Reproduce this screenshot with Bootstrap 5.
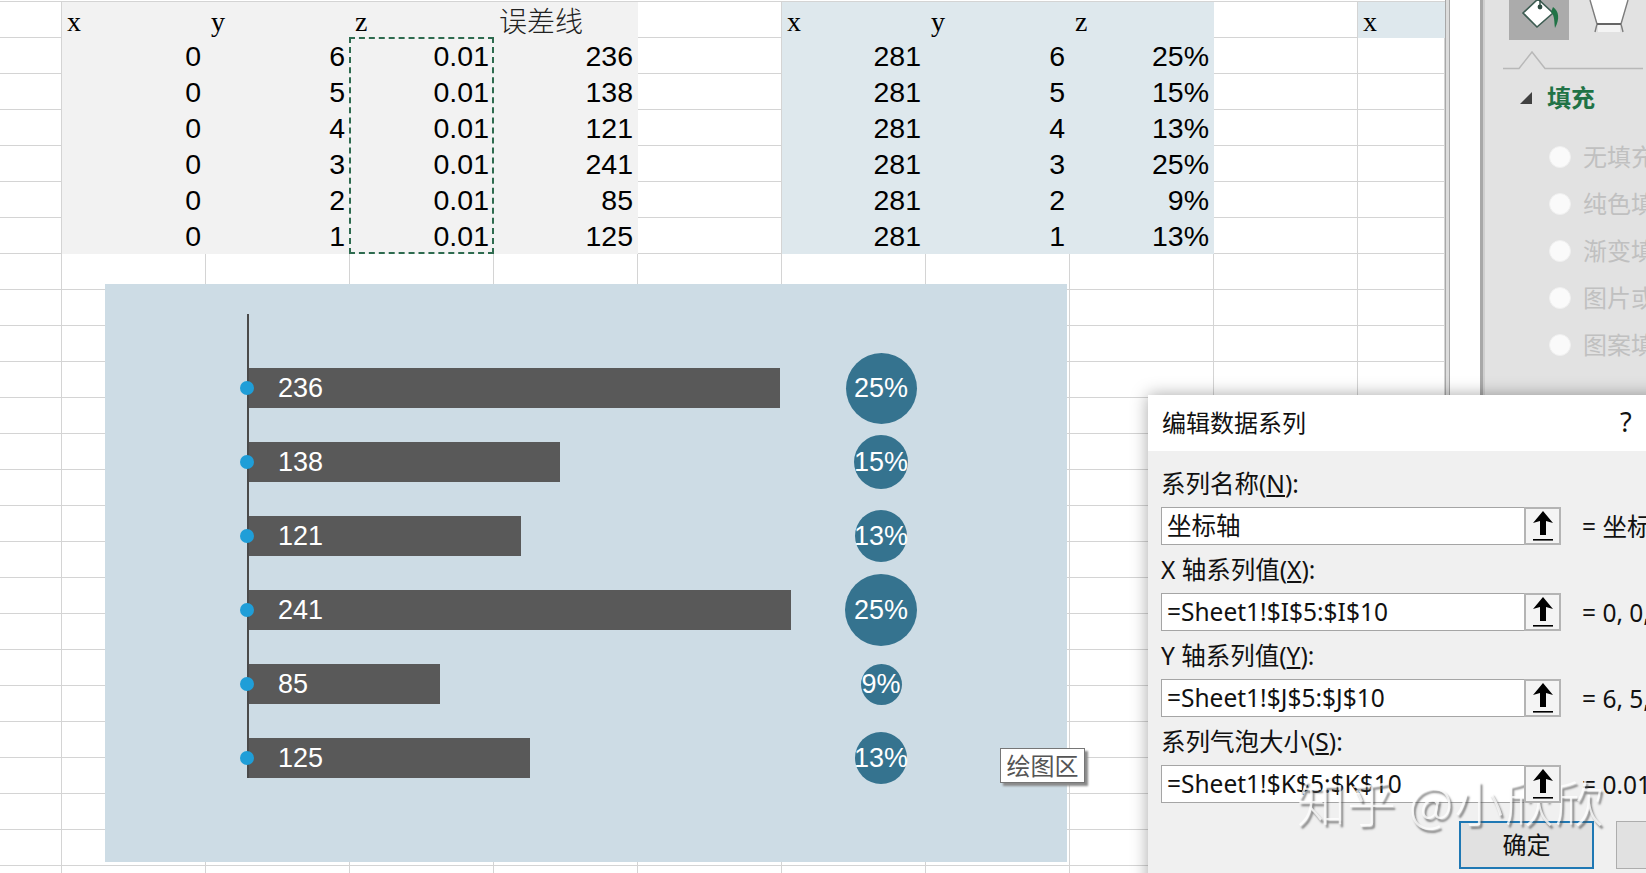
<!DOCTYPE html>
<html lang="zh">
<head>
    <meta charset="UTF-8">
    <meta name="viewport" content="width=device-width, initial-scale=1.0">
    <title>编辑数据系列</title>
    <link rel="stylesheet" href="https://cdn.jsdelivr.net/npm/bootstrap@5.3.3/dist/css/bootstrap.min.css">
    <style>
        body {
            margin: 0;
            background-color: #fff;
            font-family: "Liberation Sans", "Noto Sans CJK SC", sans-serif;
        }
        .screen {
            width: 1646px;
            height: 873px;
            overflow: hidden;
        }
        .ui-font {
            font-family: "Noto Sans", "Noto Sans CJK SC", sans-serif;
        }

        /* worksheet */
        .sheet-area {
            width: 1445px;
            flex: none;
            padding-top: 1px;
        }
        .sheet-grid {
            table-layout: fixed;
            width: 1445px;
            margin: 0;
            border-collapse: separate;
            border-spacing: 0;
            border-top: 1px solid #d4d4d4;
        }
        .sheet-grid td {
            height: 36px;
            padding: 0 4px 0 5px;
            box-sizing: border-box;
            border-width: 0 1px 1px 0;
            border-style: solid;
            border-color: #d4d4d4;
            vertical-align: bottom;
            font-size: 28.5px;
            line-height: 28px;
            color: #000;
            background-color: #fff;
            box-shadow: none;
            white-space: nowrap;
        }
        .sheet-grid td.cell-num { text-align: right; padding-bottom: 3px; }
        .sheet-grid td.cell-head { font-family: "Liberation Serif", "Noto Sans CJK SC", serif; font-size: 28px; padding-bottom: 1px; }
        .sheet-grid td.cell-cjk { font-family: "Noto Sans CJK SC", sans-serif; font-size: 28px; font-weight: 300; padding: 0 0 3px 5px; color: #222; }
        .sheet-grid td.fill-grey { background-color: #f2f2f2; border-color: #f2f2f2; }
        .sheet-grid td.fill-blue { background-color: #dee8ed; border-color: #dee8ed; }
        .copy-range {
            left: 349px;
            top: 37px;
            width: 145px;
            height: 217px;
            border: 2px dashed #2e6b4f;
        }

        /* chart */
        .chart-box {
            left: 105px;
            top: 284px;
            width: 962px;
            height: 578px;
            background-color: #cddce5;
            padding: 30px 0 0 142px;
        }
        .plot-area {
            width: 684px;
            height: 464px;
            border-left: 2px solid #4a4a4a;
            padding-top: 54px;
            gap: 34px;
        }
        .plot-row { height: 40px; flex: none; }
        .bar-track { flex: 1 1 0; height: 40px; }
        .data-bar {
            height: 40px;
            background-color: #595959;
            color: #fff;
            font-size: 27px;
            line-height: 41px;
            padding-left: 29px;
        }
        .axis-dot {
            left: -9px;
            top: 13px;
            width: 14px;
            height: 14px;
            background-color: #1f9ed8;
        }
        .bubble-slot { width: 100px; flex: none; }
        .data-bubble {
            flex: none;
            background-color: #35738f;
            color: #fff;
            font-size: 27px;
            padding-top: 1px;
            white-space: nowrap;
        }
        .area-tip {
            left: 1000px;
            top: 748px;
            width: 85px;
            height: 35px;
            background-color: #fff;
            border: 1px solid #767676;
            box-shadow: 3px 3px 2px #8a8a8a;
            color: #555;
            font-size: 24px;
            line-height: 34px;
        }

        /* splitter and format pane */
        .pane-split {
            width: 35px;
            flex: none;
            border-left: 1px solid #a8a8a8;
            box-shadow: inset 3px 0 0 #dcdcdc, inset 4px 0 0 #a8a8a8;
        }
        .format-pane {
            flex: 1 1 0;
            background-color: #e2e2e2;
            border-left: 3px solid #a8a8a8;
            box-shadow: inset 2px 0 0 #cfcfcf;
            white-space: nowrap;
            overflow: hidden;
        }
        .pane-tabs { height: 40px; padding-left: 26px; gap: 20px; }
        .pane-tab-on { width: 60px; height: 40px; background-color: #ababab; }
        .tab-notch { height: 33px; }
        .fill-head {
            height: 50px;
            padding-left: 37px;
            gap: 15px;
            color: #217346;
            font-weight: 700;
            font-size: 24px;
            margin-bottom: 10px;
        }
        .fill-caret {
            width: 0;
            height: 0;
            border-left: 12px solid transparent;
            border-bottom: 12px solid #404040;
        }
        .fill-option { height: 47px; padding-left: 66px; gap: 12px; margin: 0; }
        .fill-option .form-check-input {
            width: 22px;
            height: 22px;
            margin: 0;
            flex: none;
            background-color: #fafafa;
            border-color: #f0f0f0;
            opacity: 1;
        }
        .fill-option .form-check-label {
            color: #9f9f9f;
            font-size: 24px;
            opacity: 1;
        }

        /* dialog */
        .series-dialog {
            left: 1148px;
            top: 395px;
            width: 520px;
            height: 500px;
            background-color: #f0f0f0;
            box-shadow: 0 0 16px rgba(0, 0, 0, .35);
            color: #111;
            font-size: 24px;
        }
        .dialog-title {
            height: 56px;
            background-color: #fff;
            padding: 0 24px 0 14px;
        }
        .dialog-help { left: 472px; top: 7px; font-size: 27px; }
        .dialog-form { padding: 8px 0 0 13px; }
        .field-label { height: 48px; line-height: 50px; white-space: nowrap; font-size: 24.5px; }
        .field-row { height: 38px; }
        .field-input {
            width: 400px;
            height: 38px;
            flex: none;
            flex-wrap: nowrap;
        }
        .field-input .form-control {
            height: 38px;
            padding: 0 5px;
            border: 1px solid #a5a5a5;
            border-right: 0;
            border-radius: 0;
            background-color: #fff;
            color: #111;
            font-size: 24.5px;
            line-height: 36px;
            white-space: nowrap;
            overflow: hidden;
        }
        .field-pick {
            width: 37px;
            flex: none;
            padding: 0;
            border: 2px solid #b4b4b4;
            border-radius: 0;
            background-color: #f4f4f4;
        }
        .field-value { margin-left: 21px; height: 38px; font-size: 24.5px; white-space: nowrap; line-height: 40px; }
        .dialog-ok,
        .dialog-cancel {
            top: 426px;
            height: 48px;
            border-radius: 0;
            background-color: #e1e1e1;
            color: #111;
            font-size: 24px;
            padding: 0;
        }
        .dialog-ok { left: 311px; width: 135px; border: 2px solid #1f78b4; }
        .dialog-cancel { left: 468px; width: 135px; border: 1px solid #adadad; }

        .site-mark {
            left: 1297px;
            top: 768px;
            font-family: "Noto Sans CJK SC", sans-serif;
            font-weight: 300;
            font-size: 49px;
            letter-spacing: 1px;
            line-height: 66px;
            color: rgba(255, 255, 255, .78);
            text-shadow: 2px 3px 2px rgba(80, 80, 80, .65);
            white-space: nowrap;
        }
    </style>
</head>
<body>
    <div class="screen position-relative d-flex">
        <div class="sheet-area position-relative">
            <table class="sheet-grid">
                <colgroup id="sheet-cols"></colgroup>
                <tbody id="sheet-body"></tbody>
            </table>
            <div class="copy-range position-absolute"></div>
        </div>

        <div class="pane-split"></div>

        <div class="format-pane ui-font">
            <div class="pane-tabs d-flex">
                <div class="pane-tab-on">
                    <svg width="60" height="40" viewBox="0 0 60 40">
                        <path d="M14 13 L29 -1 L44 13 L28 27 Z" fill="#fff" stroke="#3d5c52" stroke-width="1.6"/>
                        <line x1="31" y1="0" x2="31" y2="7" stroke="#2c4a40" stroke-width="1.4"/>
                        <circle cx="31" cy="7" r="2.4" fill="#2c4a40"/>
                        <path d="M44 7 C50 11 51 19 46 28 C45 22 46 16 42 12 Z" fill="#217346"/>
                    </svg>
                </div>
                <svg width="50" height="34" viewBox="0 0 50 34">
                    <path d="M1 0 L8 24 L32 24 L39 0 Z" fill="#fff"/>
                    <path d="M1 0 L8 24 M39 0 L32 24 M8 24 L6 32 M32 24 L34 32" fill="none" stroke="#7c7c7c" stroke-width="1.4"/>
                    <line x1="8" y1="24" x2="32" y2="24" stroke="#666" stroke-width="2"/>
                    <rect x="9" y="25" width="22" height="7" fill="#f4f4f4"/>
                </svg>
            </div>
            <svg class="tab-notch d-block" width="160" height="33" viewBox="0 0 160 33">
                <path d="M20 28.5 H36 L49 12 L62 28.5 H160" fill="none" stroke="#b8b8b8" stroke-width="1.5"/>
            </svg>
            <div class="fill-head d-flex align-items-center">
                <span class="fill-caret"></span>
                <span>填充</span>
            </div>
            <div id="fill-options"></div>
        </div>

        <div class="chart-box position-absolute">
            <div class="plot-area d-flex flex-column" id="plot-area"></div>
        </div>
        <div class="area-tip position-absolute text-center ui-font">绘图区</div>

        <div class="series-dialog position-absolute ui-font">
            <div class="dialog-title d-flex align-items-center position-relative">
                <span>编辑数据系列</span>
                <span class="dialog-help position-absolute">?</span>
            </div>
            <div class="dialog-form" id="dialog-form"></div>
            <button type="button" class="btn dialog-ok position-absolute">确定</button>
            <button type="button" class="btn dialog-cancel position-absolute">取消</button>
        </div>

        <div class="site-mark position-absolute">知乎 @小欣欣</div>
    </div>

    <script>
        const TOTAL_ROWS = 25;
        const greyRows = [
            ['x', 'y', 'z', '误差线'],
            ['0', '6', '0.01', '236'],
            ['0', '5', '0.01', '138'],
            ['0', '4', '0.01', '121'],
            ['0', '3', '0.01', '241'],
            ['0', '2', '0.01', '85'],
            ['0', '1', '0.01', '125']
        ];
        const blueRows = [
            ['x', 'y', 'z'],
            ['281', '6', '25%'],
            ['281', '5', '15%'],
            ['281', '4', '13%'],
            ['281', '3', '25%'],
            ['281', '2', '9%'],
            ['281', '1', '13%']
        ];

        const series = [
            { value: 236, pct: '25%', size: 71 },
            { value: 138, pct: '15%', size: 54 },
            { value: 121, pct: '13%', size: 52 },
            { value: 241, pct: '25%', size: 72 },
            { value: 85, pct: '9%', size: 41 },
            { value: 125, pct: '13%', size: 52 }
        ];

        const fields = [
            { label: '系列名称', key: 'N', input: '坐标轴', result: '= 坐标轴' },
            { label: 'X 轴系列值', key: 'X', input: '=Sheet1!$I$5:$I$10', result: '= 0, 0, 0' },
            { label: 'Y 轴系列值', key: 'Y', input: '=Sheet1!$J$5:$J$10', result: '= 6, 5, 4' },
            { label: '系列气泡大小', key: 'S', input: '=Sheet1!$K$5:$K$10', result: '= 0.01, 0.01' }
        ];

        const fillOptions = ['无填充(N)', '纯色填充(S)', '渐变填充(G)', '图片或纹理填充(P)', '图案填充(A)'];

        function cellHtml(text, rowIndex, fill) {
            let cls = fill;
            if (rowIndex === 0) {
                cls += text === '误差线' ? ' cell-cjk' : ' cell-head';
            } else {
                cls += ' cell-num';
            }
            return `<td class="${cls}">${text}</td>`;
        }

        function buildSheet() {
            let cols = '<col style="width:62px">';
            for (let i = 0; i < 9; i++) cols += '<col style="width:144px">';
            cols += '<col style="width:87px">';
            document.getElementById('sheet-cols').innerHTML = cols;

            let html = '';
            for (let r = 0; r < TOTAL_ROWS; r++) {
                html += '<tr><td></td>';
                if (r < greyRows.length) {
                    greyRows[r].forEach(t => { html += cellHtml(t, r, 'fill-grey'); });
                    html += '<td></td>';
                    blueRows[r].forEach(t => { html += cellHtml(t, r, 'fill-blue'); });
                    html += '<td></td>';
                    html += r === 0 ? '<td class="fill-blue cell-head">x</td>' : '<td></td>';
                } else {
                    for (let c = 0; c < 10; c++) html += '<td></td>';
                }
                html += '</tr>';
            }
            document.getElementById('sheet-body').innerHTML = html;
        }

        function buildChart() {
            document.getElementById('plot-area').innerHTML = series.map(item => `
                <div class="plot-row d-flex align-items-center position-relative">
                    <span class="axis-dot position-absolute rounded-circle"></span>
                    <div class="bar-track">
                        <div class="data-bar" style="width:${item.value * 2.25}px">${item.value}</div>
                    </div>
                    <div class="bubble-slot d-flex justify-content-center align-items-center">
                        <div class="data-bubble rounded-circle d-flex justify-content-center align-items-center" style="width:${item.size}px;height:${item.size}px">${item.pct}</div>
                    </div>
                </div>`).join('');
        }

        function buildDialog() {
            const arrow = `
                <svg width="24" height="32" viewBox="0 0 24 32">
                    <path d="M12 1 L22 13 L15 11 V25 H9 V11 L2 13 Z" fill="#000"/>
                    <rect x="2" y="29" width="20" height="1.6" fill="#000"/>
                </svg>`;
            document.getElementById('dialog-form').innerHTML = fields.map(f => `
                <div class="field-label">${f.label}(<u>${f.key}</u>):</div>
                <div class="field-row d-flex align-items-start">
                    <div class="input-group field-input">
                        <div class="form-control">${f.input}</div>
                        <button type="button" class="btn field-pick d-flex justify-content-center align-items-center">${arrow}</button>
                    </div>
                    <div class="field-value">${f.result}</div>
                </div>`).join('');
        }

        function buildPane() {
            document.getElementById('fill-options').innerHTML = fillOptions.map((label, i) => `
                <div class="form-check fill-option d-flex align-items-center">
                    <input class="form-check-input" type="radio" name="fill" id="fill-${i}" disabled>
                    <label class="form-check-label" for="fill-${i}">${label}</label>
                </div>`).join('');
        }

        buildSheet();
        buildChart();
        buildDialog();
        buildPane();
    </script>
    <script src="https://cdn.jsdelivr.net/npm/bootstrap@5.3.3/dist/js/bootstrap.bundle.min.js"></script>
</body>
</html>
